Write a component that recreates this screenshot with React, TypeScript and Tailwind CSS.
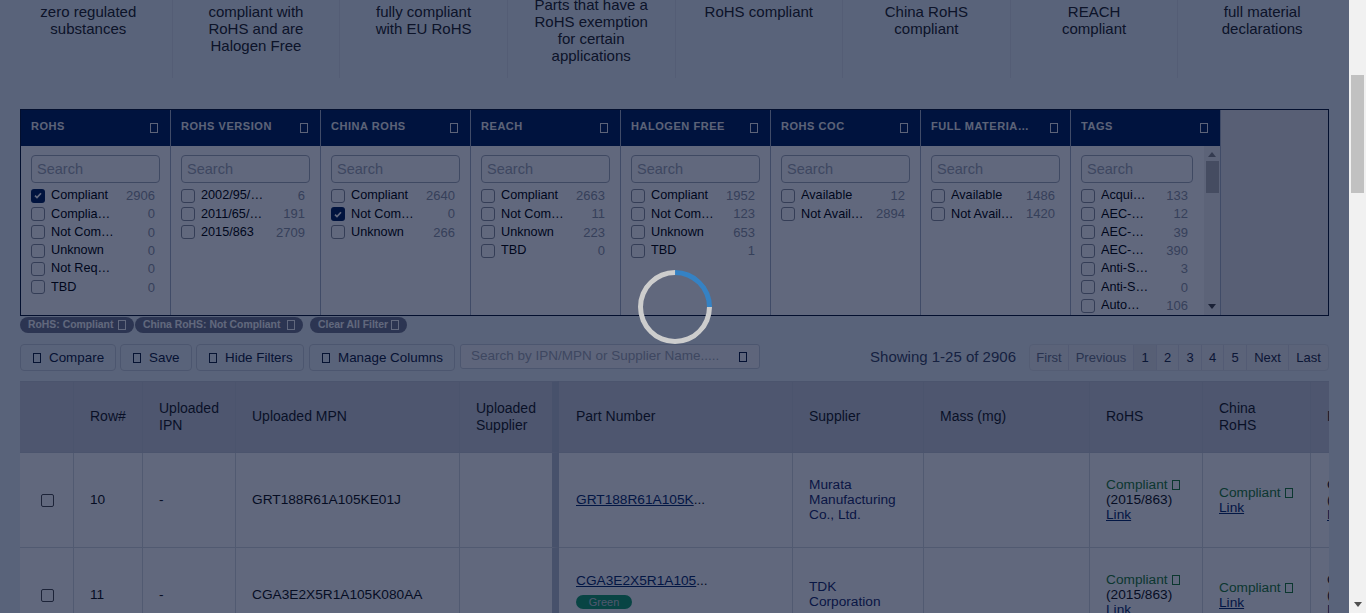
const summaries = [
  { text: ["zero regulated", "substances"] },
  { text: ["compliant with", "RoHS and are", "Halogen Free"] },
  { text: ["fully compliant", "with EU RoHS"] },
  { text: ["Parts that have a", "RoHS exemption", "for certain", "applications"], tall: true },
  { text: ["RoHS compliant"] },
  { text: ["China RoHS", "compliant"] },
  { text: ["REACH", "compliant"] },
  { text: ["full material", "declarations"] },
];

type FilterItem = { label: string; count: number; checked?: boolean };

const filters: { title: string; items: FilterItem[]; scroll?: boolean }[] = [
  {
    title: "RoHS",
    items: [
      { label: "Compliant", count: 2906, checked: true },
      { label: "Compliant by Exemption", count: 0 },
      { label: "Not Compliant", count: 0 },
      { label: "Unknown", count: 0 },
      { label: "Not Required", count: 0 },
      { label: "TBD", count: 0 },
    ],
  },
  {
    title: "RoHS Version",
    items: [
      { label: "2002/95/EC", count: 6 },
      { label: "2011/65/EU", count: 191 },
      { label: "2015/863", count: 2709 },
    ],
  },
  {
    title: "China RoHS",
    items: [
      { label: "Compliant", count: 2640 },
      { label: "Not Compliant", count: 0, checked: true },
      { label: "Unknown", count: 266 },
    ],
  },
  {
    title: "REACH",
    items: [
      { label: "Compliant", count: 2663 },
      { label: "Not Compliant", count: 11 },
      { label: "Unknown", count: 223 },
      { label: "TBD", count: 0 },
    ],
  },
  {
    title: "Halogen Free",
    items: [
      { label: "Compliant", count: 1952 },
      { label: "Not Compliant", count: 123 },
      { label: "Unknown", count: 653 },
      { label: "TBD", count: 1 },
    ],
  },
  {
    title: "RoHS COC",
    items: [
      { label: "Available", count: 12 },
      { label: "Not Available", count: 2894 },
    ],
  },
  {
    title: "Full Material Declaration",
    items: [
      { label: "Available", count: 1486 },
      { label: "Not Available", count: 1420 },
    ],
  },
  {
    title: "Tags",
    scroll: true,
    items: [
      { label: "Acquisition", count: 133 },
      { label: "AEC-Q100", count: 12 },
      { label: "AEC-Q101", count: 39 },
      { label: "AEC-Q200", count: 390 },
      { label: "Anti-Sulfur", count: 3 },
      { label: "Anti-Static", count: 0 },
      { label: "Automotive", count: 106 },
    ],
  },
];

const pages = [
  { label: "First", w: "w-[39px]", muted: true },
  { label: "Previous", w: "w-[65px]", muted: true },
  { label: "1", w: "w-[23px]", active: true },
  { label: "2", w: "w-[22px]" },
  { label: "3", w: "w-[23px]" },
  { label: "4", w: "w-[22px]" },
  { label: "5", w: "w-[23px]" },
  { label: "Next", w: "w-[42px]" },
  { label: "Last", w: "w-[39px]" },
];

// the page's icon font is missing in the reference, so its icons are empty boxes
function Tofu({ className = "border-[#0a1a3a]" }: { className?: string }) {
  return <span className={`inline-block h-[10px] w-[8px] shrink-0 border ${className}`} />;
}

function Checkbox({ checked }: { checked?: boolean }) {
  if (checked) {
    return (
      <span className="flex h-[14px] w-[14px] shrink-0 items-center justify-center rounded-[3px] bg-[#00205a]">
        <svg width="8" height="7" viewBox="0 0 8 7" fill="none">
          <path d="M1 3.6 3 5.6 7 1.2" stroke="#fff" strokeWidth="1.7" />
        </svg>
      </span>
    );
  }
  return <span className="h-[14px] w-[14px] shrink-0 rounded-[3px] border border-[#8a8f98] bg-white" />;
}

function FilterColumn({ title, items, scroll }: (typeof filters)[number]) {
  return (
    <div className="flex w-[150px] shrink-0 flex-col border-r border-[#a9b2c4]">
      <div className="flex h-[36px] items-center justify-between bg-[#00205a] pl-[10px] pr-[12px]">
        <span className="w-[101px] truncate pb-[4px] text-[11px] font-bold uppercase tracking-[0.55px] text-[#f2f2f2]">
          {title}
        </span>
        <Tofu className="border-[#f2f2f2]" />
      </div>
      <div className="flex h-[170px] overflow-hidden bg-white">
        <div className="flex-1 pl-[10px] pt-[9px]">
          <input
            placeholder="Search"
            className={`mb-[3.8px] block h-[28px] rounded-[4px] border border-[#a7adb9] bg-white px-[5px] text-[14.5px] outline-none placeholder:text-[#a3a8b4] ${scroll ? "w-[112px]" : "w-[129px]"}`}
          />
          {items.map((item) => (
            <div
              key={item.label}
              className={`flex h-[18.3px] items-center ${scroll ? "w-[107px]" : "w-[124px]"}`}
            >
              <Checkbox checked={item.checked} />
              <span className={`ml-[6px] truncate text-[12.7px] text-black ${scroll ? "w-[48px]" : "w-[65px]"}`}>
                {item.label}
              </span>
              <span className="ml-auto text-[13px] text-[#8f95a3]">{item.count}</span>
            </div>
          ))}
        </div>
        {scroll && (
          <div className="flex w-[16px] shrink-0 flex-col items-center bg-[#f1f1f1]">
            <svg className="mt-[6px]" width="8" height="5" viewBox="0 0 8 5">
              <path d="M4 0 8 5H0z" fill="#8a8a8a" />
            </svg>
            <div className="mt-[4px] h-[32px] w-[13px] bg-[#b5b5b5]" />
            <svg className="mt-auto mb-[6px]" width="8" height="5" viewBox="0 0 8 5">
              <path d="M0 0h8L4 5z" fill="#444" />
            </svg>
          </div>
        )}
      </div>
    </div>
  );
}

function Chip({ label, className = "" }: { label: string; className?: string }) {
  return (
    <span className={`flex h-[16px] items-center justify-between whitespace-nowrap rounded-full bg-[#757a8e] pl-[8px] pr-[8px] text-[10.4px] font-bold text-white ${className}`}>
      {label}
      <Tofu className="h-[8px] w-[6px] border-white" />
    </span>
  );
}

function ToolButton({ label, className }: { label: string; className: string }) {
  return (
    <button className={`flex h-[27px] items-center gap-[8px] rounded-[4px] border border-[#c9d0da] pl-[12px] pt-[1px] text-[13.4px] text-[#10203c] ${className}`}>
      <Tofu className="w-[7px] border-[#10203c]" />
      {label}
    </button>
  );
}

function Compliant() {
  return (
    <span className="flex items-center gap-[4px] text-[#1e7e34]">
      Compliant
      <Tofu className="h-[9px] w-[7px] border-[#1e7e34]" />
    </span>
  );
}

function RowCells({ row, mpn, part, supplier, green }: { row: number; mpn: string; part: string; supplier: string[]; green?: boolean }) {
  const td = "border-r border-b border-[#d5d9e0] pl-[16px] pr-[8px] align-middle";
  const link = "text-[#0a2a6a] underline";
  return (
    <tr className="h-[95px] bg-white text-[13.7px] leading-[15px] text-[#111]">
      <td className={td}>
        <span className="ml-[5px] block h-[13px] w-[13px] rounded-[2px] border border-[#4a4a4a] bg-white" />
      </td>
      <td className={`${td} pb-[2px]`}>{row}</td>
      <td className={`${td} pb-[2px]`}>-</td>
      <td className={`${td} pb-[2px]`}>{mpn}</td>
      <td className="border-r-[7px] border-b border-b-[#d5d9e0] border-r-[#bcc2cf]" />
      <td className={`${td} !pl-[17px] ${green ? "pb-[8px]" : "pb-[2px]"}`}>
        <a className={link}>{part}</a>
        <span>...</span>
        {green && (
          <span className="mt-[7px] flex h-[14px] w-[56px] items-center justify-center rounded-full bg-[#17a06a] text-[11px] text-[#cfd3da]">
            Green
          </span>
        )}
      </td>
      <td className={`${td} pb-[2px] text-[#1a2a6a]`}>
        {supplier.map((line) => (
          <div key={line}>{line}</div>
        ))}
      </td>
      <td className={td} />
      <td className={`${td} align-top pt-[24px]`}>
        <Compliant />
        <div>(2015/863)</div>
        <a className={link}>Link</a>
      </td>
      <td className={`${td} align-top pt-[32px]`}>
        <Compliant />
        <a className={link}>Link</a>
      </td>
      <td className={`${td} align-top pt-[24px]`}>
        <div>Compliant</div>
        <div>(2015/863)</div>
        <a className={link}>Link</a>
      </td>
    </tr>
  );
}

export default function App() {
  const th = "border-y border-r border-[#c4cad6] pl-[16px] pb-[1px] text-left font-normal";

  return (
    <div className="flex h-[613px] w-[1366px] overflow-hidden bg-[#f1f1f1] font-['Liberation_Sans',Arial,sans-serif]">
      <div className="relative w-[1349px] shrink-0 overflow-hidden bg-[#ebf2f7]">
        {/* Page */}
        <div className="h-[78px] overflow-hidden pl-[5px]">
          <div className="grid w-[1341px] grid-cols-8">
            {summaries.map((s) => (
              <div key={s.text[0]} className="h-[78px] border-r border-[#dde3ea] text-center text-[15px] leading-[17px] text-[#222] last:border-r-0">
                <div className={s.tall ? "-mt-[4px]" : "pt-[3px]"}>
                  {s.text.map((line) => (
                    <div key={line}>{line}</div>
                  ))}
                </div>
              </div>
            ))}
          </div>
        </div>

        <div className="px-[20px] pt-[31px]">
          <div className="flex h-[207px] w-[1309px] border border-[#0a1530] bg-[#e6e8eb]">
            {filters.map((f) => (
              <FilterColumn key={f.title} {...f} />
            ))}
          </div>

          <div className="mt-[1px] flex">
            <Chip label="RoHS: Compliant" className="w-[114px]" />
            <Chip label="China RoHS: Not Compliant" className="ml-[1px] w-[168px]" />
            <Chip label="Clear All Filter" className="ml-[7px] w-[97px]" />
          </div>

          <div className="mt-[11px] flex items-start">
            <ToolButton label="Compare" className="w-[96px]" />
            <ToolButton label="Save" className="ml-[4px] w-[72px]" />
            <ToolButton label="Hide Filters" className="ml-[4px] w-[108px]" />
            <ToolButton label="Manage Columns" className="ml-[5px] w-[146px]" />
            <div className="ml-[5px] flex h-[25px] w-[300px] items-center justify-between rounded-[3px] border border-[#c9d0da] bg-[#f7f8fa] pl-[10px] pr-[12px]">
              <span className="text-[13.5px] text-[#a3a8b4]">Search by IPN/MPN or Supplier Name.....</span>
              <Tofu className="w-[7px] border-[#0a1a3a]" />
            </div>
            <span className="ml-auto mr-[13px] self-center text-[15px] text-[#3a4660]">Showing 1-25 of 2906</span>
            <div className="flex h-[27px] overflow-hidden rounded-[4px] border border-[#dde2e8] bg-[#eef1f5]">
              {pages.map((p) => (
                <span
                  key={p.label}
                  className={`flex items-center justify-center border-r border-[#d9dee6] text-[13px] last:border-r-0 ${p.w} ${p.muted ? "text-[#6c7486]" : "text-[#1f2a44]"} ${p.active ? "bg-[#e4e6ea]" : ""}`}
                >
                  {p.label}
                </span>
              ))}
            </div>
          </div>

          <div className="mt-[10px] w-[1309px] overflow-hidden">
            <table className="w-[1412px] table-fixed border-separate border-spacing-0">
              <colgroup>
                <col className="w-[54px]" />
                <col className="w-[69px]" />
                <col className="w-[93px]" />
                <col className="w-[224px]" />
                <col className="w-[99px]" />
                <col className="w-[234px]" />
                <col className="w-[131px]" />
                <col className="w-[166px]" />
                <col className="w-[113px]" />
                <col className="w-[108px]" />
                <col className="w-[121px]" />
              </colgroup>
              <thead>
                <tr className="h-[72px] bg-[#ccd0da] text-[14px] leading-[17px] text-[#1a1a1a]">
                  <th className={th} />
                  <th className={th}>Row#</th>
                  <th className={th}>Uploaded IPN</th>
                  <th className={th}>Uploaded MPN</th>
                  <th className="border-y border-y-[#c4cad6] border-r-[7px] border-r-[#bcc2cf] pl-[16px] pb-[1px] text-left font-normal">Uploaded Supplier</th>
                  <th className={`${th} !pl-[17px]`}>Part Number</th>
                  <th className={th}>Supplier</th>
                  <th className={th}>Mass (mg)</th>
                  <th className={th}>RoHS</th>
                  <th className={th}>China<br />RoHS</th>
                  <th className={th}>REACH</th>
                </tr>
              </thead>
              <tbody>
                <RowCells row={10} mpn="GRT188R61A105KE01J" part="GRT188R61A105K" supplier={["Murata", "Manufacturing", "Co., Ltd."]} />
                <RowCells row={11} mpn="CGA3E2X5R1A105K080AA" part="CGA3E2X5R1A105" supplier={["TDK", "Corporation"]} green />
              </tbody>
            </table>
          </div>
        </div>

        {/* Loading overlay */}
        <div className="absolute inset-0 flex items-center justify-center bg-[rgba(0,12,45,0.62)]">
          <div className="h-[74px] w-[74px] rotate-45 rounded-full border-[5px] border-[#cdcdcd] border-t-[#3582c4]" />
        </div>
      </div>

      {/* Browser scrollbar */}
      <div className="flex w-[17px] shrink-0 flex-col items-center bg-[#f1f1f1]">
        <div className="mt-[75px] h-[118px] w-[13px] bg-[#c1c1c1]" />
        <svg className="mt-auto mb-[6px]" width="8" height="5" viewBox="0 0 8 5">
          <path d="M0 0h8L4 5z" fill="#505050" />
        </svg>
      </div>
    </div>
  );
}
